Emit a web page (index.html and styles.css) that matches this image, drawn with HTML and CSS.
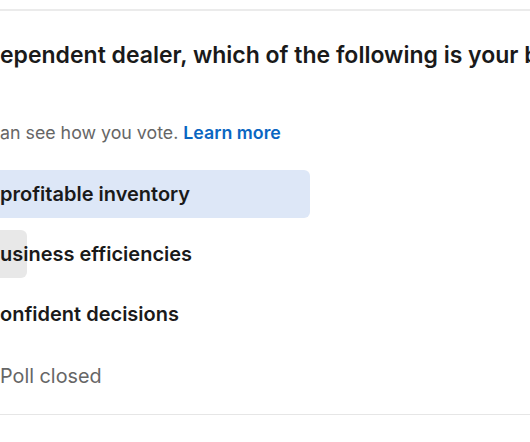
FILE: index.html
```html
<!DOCTYPE html>
<html lang="en">
<head>
<meta charset="utf-8">
<link rel="stylesheet" href="styles.css">
</head>
<body>
<div class="poll">
  <h2 class="question">ependent dealer, which of the following is your biggest challenge?</h2>
  <p class="note">an see how you vote. <a class="learn" href="#">Learn more</a></p>
  <ul class="options">
    <li class="option"><span class="fill fill-selected" style="width:310px"></span><span class="label">profitable inventory</span></li>
    <li class="option"><span class="fill" style="width:27px"></span><span class="label">usiness efficiencies</span></li>
    <li class="option"><span class="fill" style="width:0px"></span><span class="label">onfident decisions</span></li>
  </ul>
  <p class="status">Poll closed</p>
</div>
</body>
</html>
```
FILE: styles.css
```css
html, body {
  margin: 0;
  padding: 0;
  background: #ffffff;
  overflow: hidden;
}
body {
  width: 530px;
  height: 442px;
  font-family: Inter, "Liberation Sans", Arial, sans-serif;
  color: #191919;
}
.poll {
  margin-top: 9px;
  border-top: 2px solid #ebebeb;
  border-bottom: 1px solid #e6e6e6;
  padding-bottom: 26px;
  white-space: nowrap;
  overflow: hidden;
}
.question {
  margin: 30px 0 0 0;
  font-size: 23px;
  line-height: 28px;
  font-weight: 600;
  color: #1a1a1a;
}
.note {
  margin: 54px 0 0 0;
  font-size: 17.8px;
  line-height: 20px;
  color: #666666;
}
.learn {
  color: #0a66c2;
  font-weight: 600;
  text-decoration: none;
}
.options {
  list-style: none;
  margin: 27px 0 0 0;
  padding: 0;
  display: flex;
  flex-direction: column;
  gap: 12px;
}
.option {
  position: relative;
  height: 48px;
  display: flex;
  align-items: center;
}
.fill {
  position: absolute;
  left: 0;
  top: 0;
  bottom: 0;
  background: #e8e8e8;
  border-radius: 0 6px 6px 0;
}
.fill-selected {
  background: #dde7f7;
}
.label {
  position: relative;
  font-size: 20px;
  font-weight: 600;
  color: #1a1a1a;
}
.status {
  margin: 26px 0 0 0;
  font-size: 19.8px;
  line-height: 24px;
  color: #666666;
}
```
